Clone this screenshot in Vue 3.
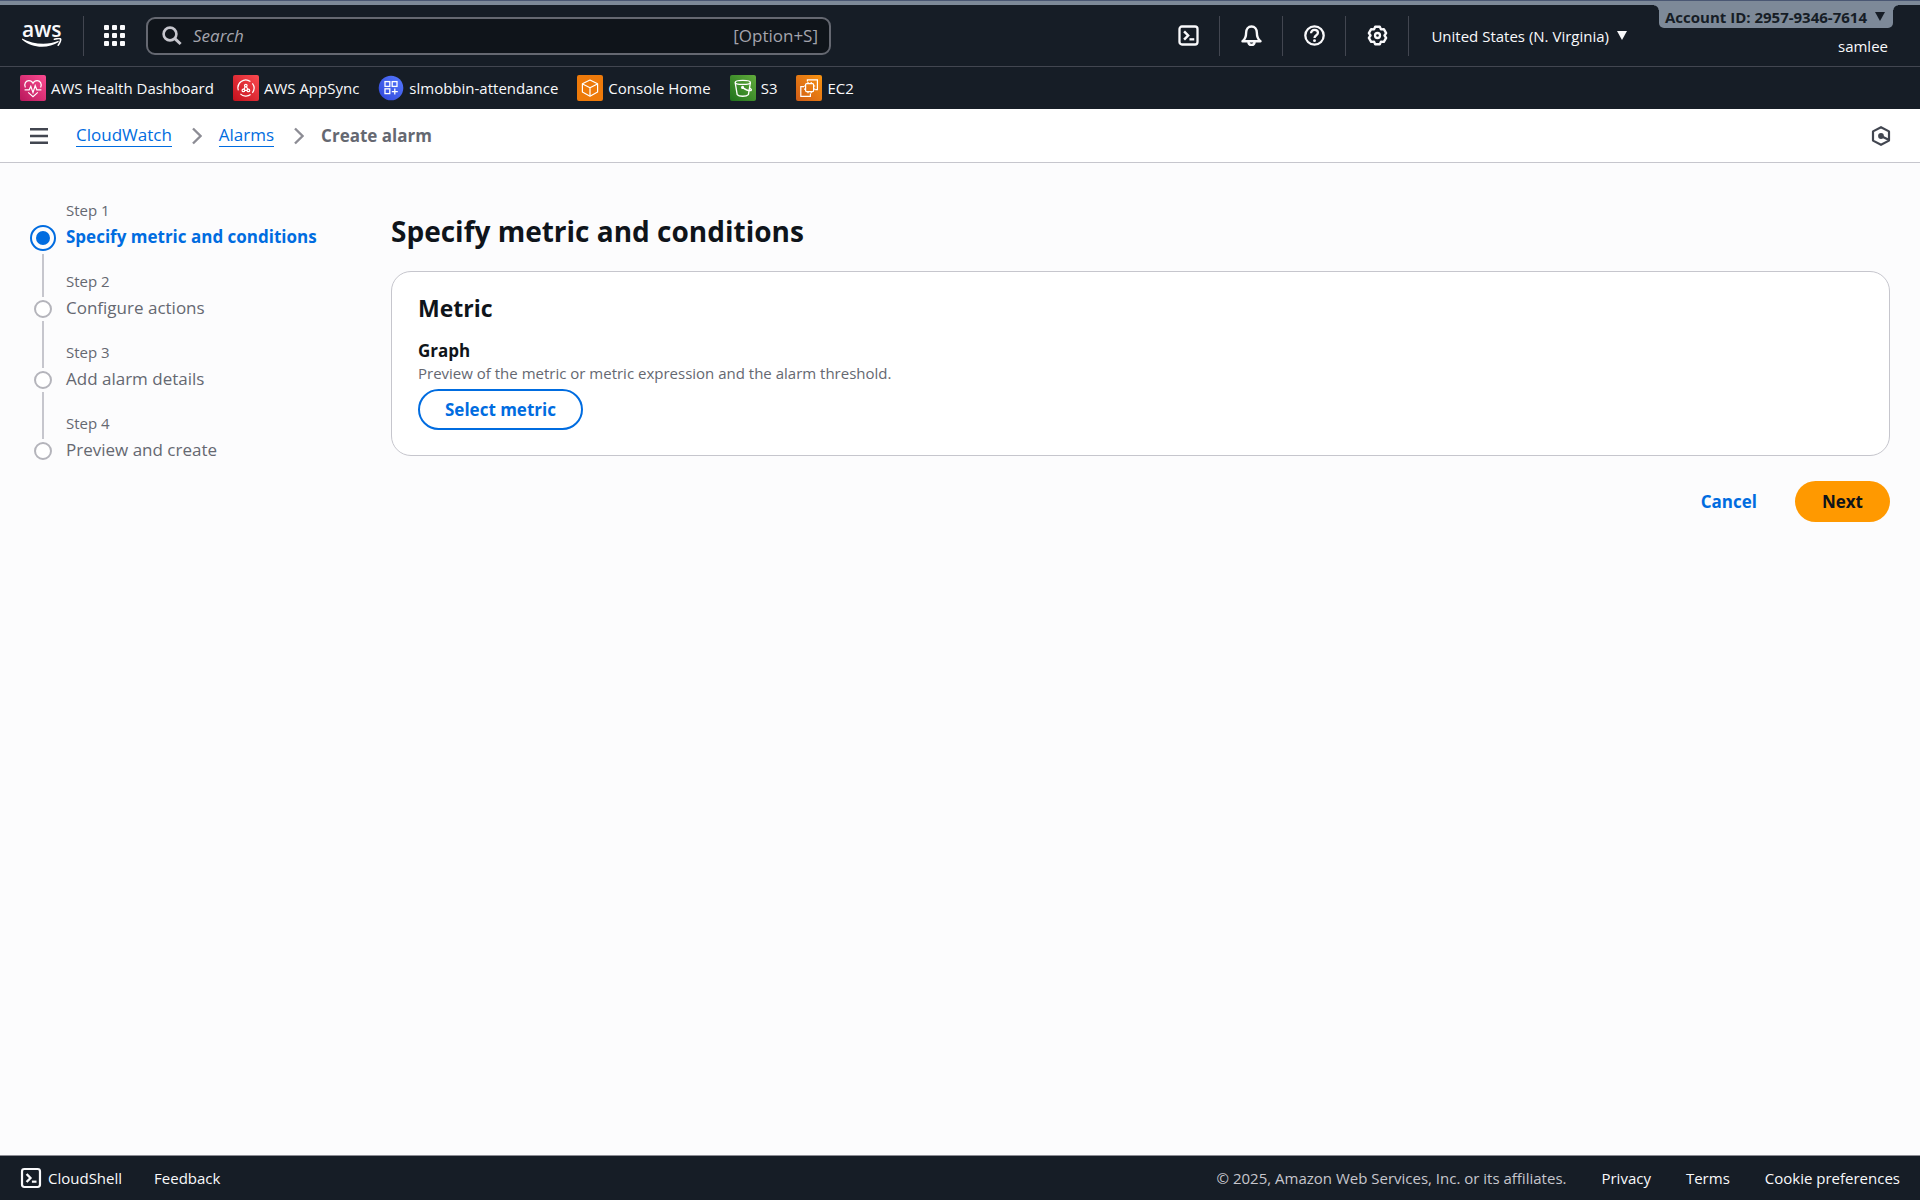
<script setup>
import { ref } from 'vue';

const query = ref('');
const currentStep = ref(0);

const favorites = [
  { id: 'health', label: 'AWS Health Dashboard' },
  { id: 'appsync', label: 'AWS AppSync' },
  { id: 'app', label: 'slmobbin-attendance' },
  { id: 'home', label: 'Console Home' },
  { id: 's3', label: 'S3' },
  { id: 'ec2', label: 'EC2' },
];

const steps = [
  'Specify metric and conditions',
  'Configure actions',
  'Add alarm details',
  'Preview and create',
];
</script>

<template>
  <div class="console">
    <header class="console-header">
      <div class="account-strip"></div>

      <div class="top-nav">
        <a href="#" class="logo" aria-label="AWS home">
          <span class="logo-text">aws</span>
          <svg class="logo-smile" viewBox="0 0 40 10" fill="none">
            <path d="M0 .6C11 6.6 26 7.6 36.4 2.8L36.8 4C26 10.8 10 10.4 0 1.4Z" fill="#fff" />
            <path d="M32.4 1.3C35 .5 38.2.4 38.6 1.1C39 2 37.8 5.4 36.2 7.2" stroke="#fff" stroke-width="1.6" stroke-linecap="round" />
          </svg>
        </a>

        <button class="services-button" aria-label="Services">
          <svg viewBox="0 0 21 21" fill="#f9f9fb">
            <rect x="0" y="0" width="5" height="5" rx="1" />
            <rect x="8" y="0" width="5" height="5" rx="1" />
            <rect x="16" y="0" width="5" height="5" rx="1" />
            <rect x="0" y="8" width="5" height="5" rx="1" />
            <rect x="8" y="8" width="5" height="5" rx="1" />
            <rect x="16" y="8" width="5" height="5" rx="1" />
            <rect x="0" y="16" width="5" height="5" rx="1" />
            <rect x="8" y="16" width="5" height="5" rx="1" />
            <rect x="16" y="16" width="5" height="5" rx="1" />
          </svg>
        </button>

        <label class="search">
          <svg class="search-icon" viewBox="0 0 20 20" fill="none" stroke="#c6c6cd" stroke-width="2.6">
            <circle cx="8" cy="8" r="6.4" />
            <path d="M12.6 12.4L18.6 18" stroke-width="3" />
          </svg>
          <input v-model="query" type="text" class="search-input" placeholder="Search" aria-label="Search" />
          <span class="search-shortcut">[Option+S]</span>
        </label>

        <div class="nav-tools">
          <button class="nav-tool" aria-label="CloudShell">
            <svg viewBox="0 0 24 24" fill="none" stroke="#f9f9fb" stroke-width="2.4">
              <rect x="2.6" y="2.6" width="18.8" height="18.8" rx="2.6" />
              <path d="M7.4 7.6L11.6 12L7.4 16.4" stroke-width="2.6" />
              <path d="M13 16H18" />
            </svg>
          </button>
          <button class="nav-tool" aria-label="Notifications">
            <svg viewBox="0 0 24 24" fill="none" stroke="#f9f9fb" stroke-width="2.5" stroke-linejoin="round">
              <path d="M2.6 18C5.6 15.8 6.4 13.6 6.4 9.2C6.4 5.4 8.6 2.6 12 2.6C15.4 2.6 17.6 5.4 17.6 9.2C17.6 13.6 18.4 15.8 21.4 18Z" />
              <path d="M8.8 18.4C8.8 20.6 10.2 21.8 12 21.8C13.8 21.8 15.2 20.6 15.2 18.4" />
            </svg>
          </button>
          <button class="nav-tool" aria-label="Help">
            <svg viewBox="0 0 24 24" fill="none" stroke="#f9f9fb" stroke-width="2.4">
              <circle cx="12" cy="12" r="9.6" />
              <path d="M8.4 9.6C8.4 7.4 9.9 6.2 12 6.2C14.1 6.2 15.6 7.5 15.6 9.2C15.6 11.8 12 11.6 12 14.6" />
              <circle cx="12" cy="17.4" r="1.5" fill="#f9f9fb" stroke="none" />
            </svg>
          </button>
          <button class="nav-tool" aria-label="Settings">
            <svg viewBox="0 0 24 24" fill="none" stroke="#f9f9fb" stroke-width="2.5" stroke-linejoin="round">
              <path d="M9.6 2.8L14.4 2.8L15.6 5.6L18.6 5.3L21 9.5L19.3 12L21 14.5L18.6 18.7L15.6 18.4L14.4 21.2L9.6 21.2L8.4 18.4L5.4 18.7L3 14.5L4.7 12L3 9.5L5.4 5.3L8.4 5.6Z" />
              <circle cx="12" cy="12" r="2.6" stroke-width="2.4" />
            </svg>
          </button>
        </div>

        <button class="region-button">
          United States (N. Virginia)
          <svg class="caret" viewBox="0 0 10 9"><path d="M0 0H10L5 9Z" fill="#f9f9fb" /></svg>
        </button>

        <button class="account">
          <span class="account-id">
            Account ID: 2957-9346-7614
            <svg class="caret" viewBox="0 0 10 9"><path d="M0 0H10L5 9Z" fill="#161d26" /></svg>
          </span>
          <span class="account-user">samlee</span>
        </button>
      </div>

      <nav class="favorites" aria-label="Favorites">
        <a v-for="item in favorites" :key="item.id" href="#" class="favorite">
          <svg v-if="item.id === 'health'" class="favorite-icon" viewBox="0 0 26 26" fill="none" stroke="#fff" stroke-width="1.2">
            <defs>
              <linearGradient id="health-bg" x1="0" y1="1" x2="1" y2="0">
                <stop offset="0" stop-color="#b8175b" />
                <stop offset="1" stop-color="#fb4a90" />
              </linearGradient>
            </defs>
            <rect width="26" height="26" rx="2" fill="url(#health-bg)" stroke="none" />
            <path d="M5.4 12.4C3.6 8.6 6 5.6 8.9 5.6C10.8 5.6 12.2 6.6 13 8.2C13.8 6.6 15.2 5.6 17.1 5.6C20 5.6 22.4 8.6 20.6 12.4" />
            <path d="M4.6 14.8H9.2L10.8 11.4L13 17.6L15.2 10.6L16.8 14.8H21.4" />
            <path d="M8.2 17.4L13 21.8L17.8 17.4" />
          </svg>
          <svg v-else-if="item.id === 'appsync'" class="favorite-icon" viewBox="0 0 26 26" fill="none" stroke="#fff" stroke-width="1.2">
            <defs>
              <linearGradient id="appsync-bg" x1="0" y1="1" x2="1" y2="0">
                <stop offset="0" stop-color="#c4101c" />
                <stop offset="1" stop-color="#fb4a50" />
              </linearGradient>
            </defs>
            <rect width="26" height="26" rx="2" fill="url(#appsync-bg)" stroke="none" />
            <path d="M17.4 6.6A7.8 7.8 0 0 0 5.4 15.4M7.4 18.8A7.8 7.8 0 0 0 17.6 19.6M19.4 17.8A7.8 7.8 0 0 0 19.4 8.4" />
            <circle cx="12.8" cy="10.6" r="1.3" />
            <circle cx="10.4" cy="15.4" r="1.3" />
            <circle cx="15.4" cy="15.4" r="1.3" />
            <path d="M12.2 11.8L11 14.2M13.4 11.8L14.8 14.2M11.7 15.4H14.1" />
          </svg>
          <svg v-else-if="item.id === 'app'" class="favorite-icon" viewBox="0 0 26 26" fill="none" stroke="#fff" stroke-width="1.3">
            <defs>
              <linearGradient id="app-bg" x1="0" y1="1" x2="1" y2="0">
                <stop offset="0" stop-color="#2f46d8" />
                <stop offset="1" stop-color="#5578ff" />
              </linearGradient>
            </defs>
            <circle cx="13" cy="13" r="12.3" fill="url(#app-bg)" stroke="none" />
            <rect x="7" y="6.6" width="4.8" height="4.8" />
            <rect x="14.2" y="6.6" width="4.8" height="4.8" />
            <rect x="7" y="13.8" width="4.8" height="4.8" />
            <path d="M16.8 13.6V19.6M13.8 16.6H19.8" />
          </svg>
          <svg v-else-if="item.id === 'home'" class="favorite-icon" viewBox="0 0 26 26" fill="none" stroke="#fff" stroke-width="1.2" stroke-linejoin="round">
            <rect width="26" height="26" rx="2" fill="#ee7a0a" stroke="none" />
            <path d="M13 5L20.6 8.8V17L13 21.2L5.4 17V8.8Z" />
            <path d="M5.6 9L13 12.8L20.4 9M13 12.8V21" />
          </svg>
          <svg v-else-if="item.id === 's3'" class="favorite-icon" viewBox="0 0 26 26" fill="none" stroke="#fff" stroke-width="1.3">
            <defs>
              <linearGradient id="s3-bg" x1="0" y1="1" x2="1" y2="0">
                <stop offset="0" stop-color="#1f721c" />
                <stop offset="1" stop-color="#62ac3c" />
              </linearGradient>
            </defs>
            <rect width="26" height="26" rx="2" fill="url(#s3-bg)" stroke="none" />
            <ellipse cx="12.8" cy="7.4" rx="7.6" ry="2" />
            <path d="M5.2 7.6L7.2 19.6C9 21.8 16.4 21.8 18.4 19.6L20.4 7.6" />
            <path d="M12.6 12.6C15 14.2 18.8 16 21 15.6C22 15 21 13.8 19.4 13.2" />
            <circle cx="12.6" cy="12.4" r=".9" fill="#fff" />
          </svg>
          <svg v-else class="favorite-icon" viewBox="0 0 26 26" fill="none" stroke="#fff" stroke-width="1.2">
            <defs>
              <linearGradient id="ec2-bg" x1="0" y1="1" x2="1" y2="0">
                <stop offset="0" stop-color="#d05c17" />
                <stop offset="1" stop-color="#f89310" />
              </linearGradient>
            </defs>
            <rect width="26" height="26" rx="2" fill="url(#ec2-bg)" stroke="none" />
            <rect x="9.6" y="8.6" width="8" height="8" rx="1" />
            <path d="M12 7V8.6M15.2 7V8.6M12 16.6V18.2M15.2 16.6V18.2M8 11H9.6M8 14.2H9.6M17.6 11H19.2M17.6 14.2H19.2" />
            <path d="M11.4 6.6V4.8H21.4V14.6H19.2M8 11.6H4.8V21.4H14.4V18.4" />
          </svg>
          <span>{{ item.label }}</span>
        </a>
      </nav>
    </header>

    <div class="breadcrumb-bar">
      <button class="icon-button" aria-label="Open navigation">
        <svg class="menu-icon" viewBox="0 0 18 16"><path d="M0 1.2H18M0 8H18M0 14.8H18" stroke="#424650" stroke-width="2.4" /></svg>
      </button>
      <nav aria-label="Breadcrumbs">
        <ol class="breadcrumbs">
          <li><a href="#">CloudWatch</a></li>
          <li>
            <svg class="chevron" viewBox="0 0 10 18" fill="none"><path d="M1 1.5L8.6 9L1 16.5" stroke="#8c8c94" stroke-width="2.4" /></svg>
            <a href="#">Alarms</a>
          </li>
          <li>
            <svg class="chevron" viewBox="0 0 10 18" fill="none"><path d="M1 1.5L8.6 9L1 16.5" stroke="#8c8c94" stroke-width="2.4" /></svg>
            <span class="breadcrumb-current">Create alarm</span>
          </li>
        </ol>
      </nav>
      <button class="icon-button tools-button" aria-label="Open tools">
        <svg class="tools-icon" viewBox="0 0 20 20" fill="none" stroke="#424650" stroke-width="2.2">
          <path d="M10 1.2L18 5.4V14.6L10 18.8L2 14.6V5.4Z" stroke-linejoin="round" />
          <path d="M10 10L17.6 13.8" stroke-width="2.4" />
          <circle cx="10" cy="10" r="2.9" fill="#424650" stroke="none" />
        </svg>
      </button>
    </div>

    <div class="content">
      <nav class="steps" aria-label="Steps">
        <ol>
          <li v-for="(step, index) in steps" :key="step" class="step" :class="{ active: index === currentStep }">
            <div class="step-track"><span class="step-dot"></span></div>
            <div>
              <div class="step-label">Step {{ index + 1 }}</div>
              <div class="step-title">{{ step }}</div>
            </div>
          </li>
        </ol>
      </nav>

      <main class="main">
        <h1>Specify metric and conditions</h1>

        <section class="card">
          <h2>Metric</h2>
          <h3>Graph</h3>
          <p class="description">Preview of the metric or metric expression and the alarm threshold.</p>
          <button class="button button-normal">Select metric</button>
        </section>

        <div class="actions">
          <button class="button button-link">Cancel</button>
          <button class="button button-primary">Next</button>
        </div>
      </main>
    </div>

    <footer class="console-footer">
      <div class="footer-group">
        <button class="footer-link">
          <svg class="footer-icon" viewBox="0 0 24 24" fill="none" stroke="#f9f9fb" stroke-width="2.4">
            <rect x="2.2" y="2.2" width="19.6" height="19.6" rx="2.6" />
            <path d="M7.2 7.6L11.4 12L7.2 16.4" stroke-width="2.6" />
            <path d="M13 16H18" />
          </svg>
          CloudShell
        </button>
        <a href="#" class="footer-link">Feedback</a>
      </div>
      <div class="footer-group legal">
        <span class="copyright">© 2025, Amazon Web Services, Inc. or its affiliates.</span>
        <a href="#" class="footer-link">Privacy</a>
        <a href="#" class="footer-link">Terms</a>
        <button class="footer-link">Cookie preferences</button>
      </div>
    </footer>
  </div>
</template>

<style>
body {
  margin: 0;
  background: #fcfcfd;
}
</style>

<style scoped>
.console {
  display: flex;
  flex-direction: column;
  min-height: 100vh;
  font-family: "Open Sans", "Noto Sans", sans-serif;
  font-size: 17px;
  font-weight: 500;
  color: #0f141a;
}

.console * {
  box-sizing: border-box;
}

button {
  background: none;
  border: none;
  padding: 0;
  font: inherit;
  color: inherit;
  cursor: pointer;
}

a {
  color: inherit;
  text-decoration: none;
}

svg {
  display: block;
  flex-shrink: 0;
}

ol {
  list-style: none;
  margin: 0;
  padding: 0;
}

.console-header {
  background: #161d26;
  color: #f9f9fb;
  font-size: 15px;
  white-space: nowrap;
}

.account-strip {
  height: 5px;
  background: #7d8998;
  border-top: 1px solid #4a5773;
}

.top-nav {
  display: flex;
  align-items: center;
  height: 62px;
  padding: 0 27px 0 22px;
  border-bottom: 1px solid #424650;
}

.logo {
  display: flex;
  flex-direction: column;
  justify-content: center;
  height: 40px;
  padding: 0 21px 3px 0;
  border-right: 1px solid #424650;
}

.logo-text {
  font-size: 21px;
  font-weight: 600;
  line-height: 18px;
}

.logo-smile {
  width: 40px;
  height: 10px;
}

.services-button {
  padding: 0 21px 0 20px;
}

.services-button svg {
  width: 21px;
  height: 21px;
}

.search {
  display: flex;
  align-items: center;
  flex: 0 1 685px;
  gap: 11px;
  height: 38px;
  padding: 0 11px 0 14px;
  background: #0f141a;
  border: 2px solid #656871;
  border-radius: 9px;
  font-size: 17px;
  color: #a4a4ad;
}

.search-icon {
  width: 20px;
  height: 20px;
}

.search-input {
  flex: 1;
  min-width: 0;
  padding: 0;
  background: transparent;
  border: none;
  outline: none;
  font: inherit;
  color: #f9f9fb;
}

.search-input::placeholder {
  color: #a4a4ad;
  font-style: italic;
  opacity: 1;
}

.nav-tools {
  display: flex;
  margin-left: auto;
}

.nav-tool {
  display: flex;
  align-items: center;
  justify-content: center;
  width: 63px;
  height: 40px;
  border-right: 1px solid #424650;
}

.nav-tool svg {
  width: 23px;
  height: 23px;
}

.region-button {
  display: flex;
  align-items: center;
  gap: 8px;
  padding: 0 32px 0 22px;
}

.caret {
  width: 10px;
  height: 9px;
}

.account {
  display: flex;
  flex-direction: column;
  align-items: flex-end;
  align-self: flex-start;
}

.account-id {
  position: relative;
  display: flex;
  align-items: center;
  gap: 8px;
  height: 23px;
  padding: 0 8px 0 6px;
  background: #7d8998;
  border-radius: 0 0 5px 5px;
  color: #161d26;
  font-weight: 700;
}

/* flares where the tab meets the strip */
.account-id::before,
.account-id::after {
  content: "";
  position: absolute;
  top: 0;
  width: 5px;
  height: 5px;
}

.account-id::before {
  right: 100%;
  background: radial-gradient(circle at 0 100%, transparent 4px, #7d8998 5px);
}

.account-id::after {
  left: 100%;
  background: radial-gradient(circle at 100% 100%, transparent 4px, #7d8998 5px);
}

.account-user {
  padding: 6px 5px 0;
  line-height: 24px;
}

.favorites {
  display: flex;
  gap: 19px;
  height: 42px;
  padding: 0 20px;
}

.favorite {
  display: flex;
  align-items: center;
  gap: 5px;
}

.favorite-icon {
  width: 26px;
  height: 26px;
}

.breadcrumb-bar {
  display: flex;
  align-items: center;
  height: 54px;
  padding: 0 29px 0 30px;
  background: #fff;
  border-bottom: 1px solid #c6c6cd;
}

.menu-icon {
  width: 18px;
  height: 16px;
}

.breadcrumbs,
.breadcrumbs li {
  display: flex;
  align-items: center;
}

.breadcrumbs {
  margin-left: 28px;
}

.breadcrumbs a {
  color: #006ce0;
  line-height: 22px;
  border-bottom: 1px solid #006ce0;
}

.chevron {
  width: 10px;
  height: 18px;
  margin: 0 17px 0 20px;
}

.breadcrumb-current {
  color: #656871;
  font-weight: 700;
}

.tools-button {
  margin-left: auto;
}

.tools-icon {
  width: 20px;
  height: 20px;
}

.content {
  display: flex;
  flex: 1;
  padding: 36px 30px;
}

.steps {
  flex: 0 0 361px;
}

.step {
  display: flex;
  gap: 10px;
  height: 71px;
  color: #656871;
}

.step-track {
  display: flex;
  flex-direction: column;
  align-items: center;
  width: 26px;
}

.step-track::before,
.step-track::after {
  content: "";
  width: 2px;
  background: #c6c6cd;
}

.step-track::before {
  height: 27px;
}

.step-track::after {
  flex: 1;
}

.step:first-child .step-track::before,
.step:last-child .step-track::after {
  background: transparent;
}

.step-dot {
  width: 18px;
  height: 18px;
  margin: 3px 0;
  background: #fff;
  border: 2px solid #b4b4bb;
  border-radius: 50%;
}

.step.active .step-track::before {
  height: 23px;
}

.step.active .step-dot {
  width: 26px;
  height: 26px;
  padding: 4px;
  background: #006ce0 content-box;
  border-color: #006ce0;
}

.step-label {
  font-size: 15px;
  line-height: 22px;
}

.step-title {
  line-height: 32px;
}

.step.active .step-title {
  color: #006ce0;
  font-weight: 700;
}

.main {
  flex: 1;
}

h1,
h2,
h3,
p {
  margin: 0;
}

h1 {
  margin: 12px 0 20px;
  font-size: 28px;
  line-height: 40px;
}

.card {
  padding: 20px 26px 25px;
  background: #fff;
  border: 1px solid #c6c6cd;
  border-radius: 20px;
}

h2 {
  margin-bottom: 15px;
  font-size: 23px;
  line-height: 32px;
}

h3 {
  font-size: 17px;
  line-height: 24px;
}

.description {
  margin-bottom: 6px;
  color: #656871;
  font-size: 15px;
  font-weight: 400;
  line-height: 20px;
}

.button {
  height: 41px;
  padding: 0 25px;
  border: 2px solid transparent;
  border-radius: 21px;
  font-weight: 700;
}

.button-normal {
  border-color: #006ce0;
  color: #006ce0;
}

.button-link {
  color: #006ce0;
}

.button-primary {
  background: #ff9900;
  color: #0f141a;
}

.actions {
  display: flex;
  justify-content: flex-end;
  gap: 11px;
  margin-top: 25px;
}

.console-footer {
  display: flex;
  align-items: center;
  justify-content: space-between;
  height: 45px;
  padding: 0 20px;
  background: #161d26;
  border-top: 1px solid #8c8c94;
  color: #f9f9fb;
  font-size: 15px;
  font-weight: 400;
  white-space: nowrap;
}

.footer-group {
  display: flex;
  align-items: center;
  gap: 32px;
}

.footer-group.legal {
  gap: 35px;
}

.footer-link {
  display: flex;
  align-items: center;
  gap: 6px;
}

.footer-icon {
  width: 22px;
  height: 22px;
}

.copyright {
  color: #c6c6cd;
}
</style>
